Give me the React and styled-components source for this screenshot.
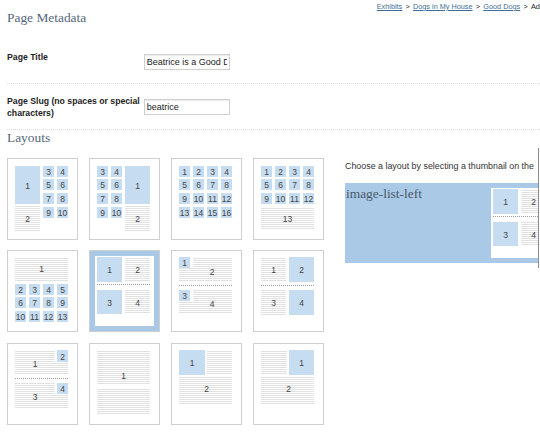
import React, { useId } from 'react';
import styled, { createGlobalStyle } from 'styled-components';

const Global = createGlobalStyle`
  html, body { margin: 0; padding: 0; background: #fff; overflow: hidden; }
  body { font-family: "Liberation Sans", Arial, sans-serif; }
  * { box-sizing: border-box; }
`;

const Page = styled.div`
  width: 780px;
  padding-left: 7px;
`;

const Header = styled.header`
  display: grid;
  grid-template-columns: 369.7px 1fr;
  align-items: start;
`;

const Title = styled.h1`
  margin: ${(p) => p.$top || 0}px 0 0;
  font: normal 13.4px/16px "Liberation Serif", "Times New Roman", serif;
  color: #56687c;
`;

const Breadcrumb = styled.nav`
  margin-top: 2px;
  font-size: 7.3px;
  line-height: 9px;
  color: #222;
  white-space: nowrap;
`;

const Crumb = styled.a`
  color: #3f6f98;
  text-decoration: underline;
`;

const Sep = styled.span`
  padding: 0 1.2px;
`;

const Fields = styled.section`
  margin-top: 14.1px;
`;

const FieldRow = styled.div`
  display: grid;
  grid-template-columns: 136.7px 86px;
  align-items: start;
  padding: 12px 0 9.5px;
  border-bottom: 1px dotted #dcdcdc;
`;

const Label = styled.label`
  font-weight: bold;
  font-size: 8.7px;
  line-height: 11.5px;
  color: #222;
`;

const Input = styled.input`
  width: 86px;
  height: 16px;
  margin: 2.5px 0 3.5px;
  padding: 0 2px;
  border: 1px solid #cfcfcf;
  box-shadow: inset 0 1px 1px rgba(0, 0, 0, 0.08);
  font: 9px "Liberation Sans", Arial, sans-serif;
  color: #222;
  background: #fff;
  outline: none;
`;

const LayoutArea = styled.section`
  display: flex;
  align-items: flex-start;
  margin-top: 2.4px;
`;

const Grid = styled.div`
  display: grid;
  grid-template-columns: repeat(4, 71px);
  column-gap: 11px;
  row-gap: 10.5px;
  margin-top: 10px;
  flex: none;
`;

const Thumb = styled.div`
  width: 71px;
  height: 82px;
  padding: 5px;
  border: 1px solid #cfcfcf;
  background: ${(p) => (p.$selected ? '#a8c8e6' : '#fff')};
  svg { display: block; background: #fff; }
`;

const RightCol = styled.aside`
  flex: none;
  width: 194px;
  margin-left: 21px;
  padding: 13px 0 5px;
  border-right: 1px solid #8c8c8c;
  overflow: hidden;
`;

const Hint = styled.p`
  margin: 0;
  font-size: 8.9px;
  line-height: 11px;
  color: #333;
  white-space: nowrap;
`;

const Panel = styled.div`
  margin-top: 11.3px;
  width: 210px;
  height: 80px;
  background: #a9c9e6;
  display: flex;
  justify-content: space-between;
  align-items: flex-start;
`;

const PanelTitle = styled.h2`
  margin: 0;
  padding: 2.5px 0 0 1px;
  font: normal 13.4px/16px "Liberation Serif", "Times New Roman", serif;
  color: #4a5a6c;
`;

const PanelPic = styled.div`
  margin: 5px;
  background: #fff;
  svg { display: block; }
`;

const BLUE = '#c6dcf0';
const LINE = '#e1e1e1';
const NUM = '#444';

function LayoutPic({ items }) {
  const id = 'p' + useId().replace(/[^a-zA-Z0-9]/g, '');
  const txt = (x, y, s, k) => (
    <text
      key={k}
      x={x}
      y={y}
      textAnchor="middle"
      dominantBaseline="central"
      fontSize="8.5"
      fill={NUM}
      fontFamily="'Liberation Sans', Arial, sans-serif"
    >
      {s}
    </text>
  );
  return (
    <svg width="59" height="70" viewBox="0 0 59 70">
      <defs>
        <pattern id={id} width="4" height="2" patternUnits="userSpaceOnUse">
          <rect width="4" height="1" fill={LINE} />
        </pattern>
      </defs>
      {items.map((it, i) => {
        const [t, ...a] = it;
        if (t === 'b') {
          const [x, y, w, h, s] = a;
          return (
            <g key={i}>
              <rect x={x} y={y} width={w} height={h} fill={BLUE} />
              {txt(x + w / 2, y + h / 2 + 0.5, s, 't')}
            </g>
          );
        }
        if (t === 'l') {
          const [x, y, w, h] = a;
          return <rect key={i} x={x} y={y} width={w} height={h} fill={`url(#${id})`} />;
        }
        if (t === 'd') {
          return (
            <line key={i} x1="2" x2="55" y1={a[0]} y2={a[0]} stroke="#9c9c9c" strokeDasharray="1 1" />
          );
        }
        return txt(a[0], a[1], a[2], i);
      })}
    </svg>
  );
}

const XS = [2, 16, 30, 44];
const YS = [2, 15, 29, 43];
const squares = (xs, ys, start) => {
  const out = [];
  let n = start;
  ys.forEach((y) =>
    xs.forEach((x) => {
      out.push(['b', x, y, 11, 11, String(n)]);
      n += 1;
    })
  );
  return out;
};

const F = [
  ['b', 2, 1, 25, 25, '1'],
  ['l', 30, 1, 25, 25],
  ['t', 42.5, 14, '2'],
  ['d', 28.5],
  ['b', 2, 34, 25, 24, '3'],
  ['l', 30, 34, 25, 24],
  ['t', 42.5, 46.5, '4'],
];

const LAYOUTS = [
  [['b', 2, 2, 25, 38, '1'], ...squares([30, 44], YS, 3), ['l', 2, 42, 25, 25], ['t', 14.5, 55, '2']],
  [...squares([2, 16], YS, 3), ['b', 30, 2, 25, 38, '1'], ['l', 30, 42, 25, 25], ['t', 42.5, 55, '2']],
  squares(XS, YS, 1),
  [...squares(XS, YS.slice(0, 3), 1), ['l', 2, 43, 53, 23], ['t', 28.5, 55, '13']],
  [['l', 2, 1, 53, 24], ['t', 28.5, 13, '1'], ...squares(XS, [28, 41, 55], 2)],
  F,
  [
    ['b', 2, 1, 11, 11, '1'],
    ['l', 16, 1, 39, 11],
    ['l', 2, 12, 53, 13],
    ['t', 35, 15.5, '2'],
    ['d', 29.5],
    ['b', 2, 34, 11, 11, '3'],
    ['l', 16, 34, 39, 11],
    ['l', 2, 45, 53, 13],
    ['t', 35, 47.5, '4'],
  ],
  [
    ['l', 2, 1, 25, 25],
    ['t', 14.5, 14, '1'],
    ['b', 30, 1, 25, 25, '2'],
    ['d', 29.5],
    ['l', 2, 34, 25, 25],
    ['t', 14.5, 47, '3'],
    ['b', 30, 34, 25, 25, '4'],
  ],
  [
    ['l', 2, 1, 40, 12],
    ['b', 44, 1, 11, 12, '2'],
    ['l', 2, 13, 53, 12],
    ['t', 22, 15, '1'],
    ['d', 29.5],
    ['l', 2, 34, 40, 11],
    ['b', 44, 34, 11, 11, '4'],
    ['l', 2, 45, 53, 14],
    ['t', 22, 48, '3'],
  ],
  [['l', 2, 1, 53, 34], ['l', 2, 40, 53, 26], ['t', 28.5, 27, '1']],
  [['b', 2, 1, 26, 25, '1'], ['l', 30, 1, 25, 25], ['l', 2, 28, 53, 27], ['t', 29.5, 40, '2']],
  [['l', 2, 1, 26, 25], ['b', 30, 1, 25, 25, '1'], ['l', 2, 28, 53, 27], ['t', 29.5, 40, '2']],
];

export default function App() {
  return (
    <>
      <Global />
      <Page>
        <Header>
          <Title $top={9.5}>Page Metadata</Title>
          <Breadcrumb>
            <Crumb href="#">Exhibits</Crumb>
            <Sep> &gt; </Sep>
            <Crumb href="#">Dogs in My House</Crumb>
            <Sep> &gt; </Sep>
            <Crumb href="#">Good Dogs</Crumb>
            <Sep> &gt; </Sep>
            Add Page
          </Breadcrumb>
        </Header>
        <Fields>
          <FieldRow>
            <Label htmlFor="title">Page Title</Label>
            <Input id="title" value="Beatrice is a Good Dog" readOnly />
          </FieldRow>
          <FieldRow>
            <Label htmlFor="slug">Page Slug (no spaces or special characters)</Label>
            <Input id="slug" value="beatrice" readOnly />
          </FieldRow>
        </Fields>
        <Title>Layouts</Title>
        <LayoutArea>
          <Grid>
            {LAYOUTS.map((items, i) => (
              <Thumb key={i} $selected={i === 5}>
                <LayoutPic items={items} />
              </Thumb>
            ))}
          </Grid>
          <RightCol>
            <Hint>Choose a layout by selecting a thumbnail on the</Hint>
            <Panel>
              <PanelTitle>image-list-left</PanelTitle>
              <PanelPic>
                <LayoutPic items={F} />
              </PanelPic>
            </Panel>
          </RightCol>
        </LayoutArea>
      </Page>
    </>
  );
}
